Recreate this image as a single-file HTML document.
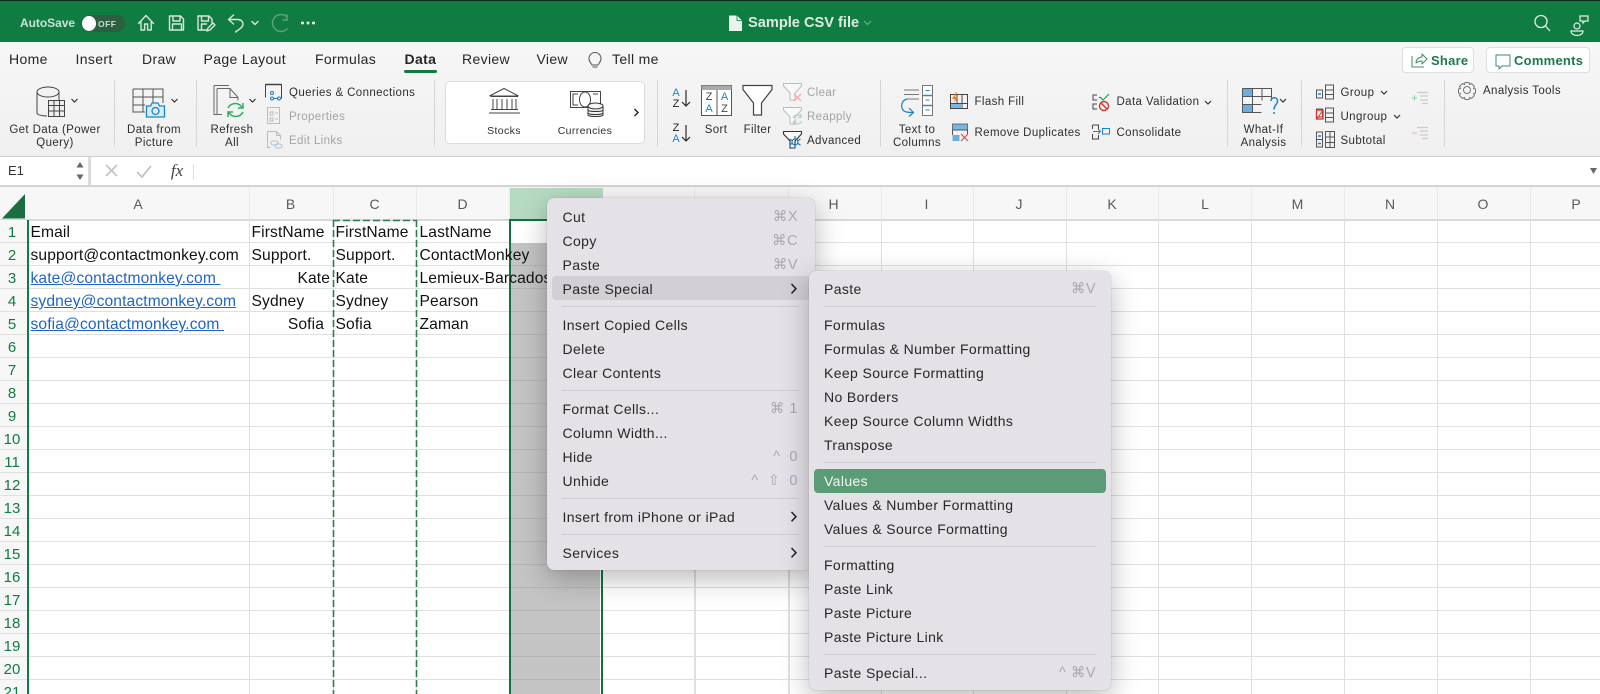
<!DOCTYPE html>
<html><head><meta charset="utf-8"><title>Sample CSV file</title>
<style>
html,body{margin:0;padding:0;background:#fff}
#r{position:relative;width:1600px;height:694px;overflow:hidden;font-family:"Liberation Sans",sans-serif;color:#2b2b2b;filter:blur(.3px)}
.a{position:absolute}
.t{position:absolute;white-space:nowrap;line-height:16px;transform:translateY(-50%)}
.c{position:absolute;white-space:nowrap;line-height:16px;transform:translate(-50%,-50%);text-align:center}
.tab{font-size:14px;letter-spacing:.35px;color:#262626}
.rb{font-size:11.5px;letter-spacing:.38px;color:#2e2e2e}
.dim{color:#a3a3a3}
.div{position:absolute;top:80px;width:1px;height:67px;background:#d6d6d6}
.hd{font-size:14px;color:#5a5a5a}
.rn{font-size:15px;color:#107c41;left:12px}
.cell{font-size:15.6px;letter-spacing:.12px;color:#111}
.v{position:absolute;top:220px;height:474px;width:1px;background:#e0e0e0}
.hv{position:absolute;top:188px;height:31px;width:1px;background:#ebebeb}
.m{position:absolute;background:#e4e2e7;border-radius:7px;box-shadow:0 8px 28px rgba(0,0,0,.28),0 0 1px rgba(0,0,0,.3)}
.mi{font-size:14px;letter-spacing:.38px;color:#262626}
.sc{position:absolute;white-space:nowrap;font-size:14.5px;color:#aaa9ad;line-height:16px;transform:translateY(-50%);text-align:right;letter-spacing:.5px}
.sep{position:absolute;height:1px;background:#cfcdd2}
svg{position:absolute;left:0;top:0;overflow:visible}
</style></head><body>
<div id="r">
<!-- title bar -->
<div class="a" style="left:0;top:0;width:1600px;height:42px;background:#107c41"></div>
<div class="a" style="left:0;top:0;width:1600px;height:1px;background:#0b2b1a"></div>
<div class="t" style="left:20px;top:23px;font-size:12px;font-weight:bold;color:#c9e2d3;letter-spacing:-.05px">AutoSave</div>
<div class="a" style="left:81px;top:15px;width:44px;height:17px;border-radius:9px;background:#2c5f42"></div>
<div class="a" style="left:82px;top:16px;width:14px;height:15px;border-radius:50%;background:#fff"></div>
<div class="t" style="left:98px;top:23.5px;font-size:8.5px;font-weight:bold;color:#c9dcd0;letter-spacing:.5px">OFF</div>
<div class="t" style="left:748px;top:23px;font-size:14.6px;font-weight:bold;color:#dcebe2">Sample CSV file</div>

<!-- ribbon -->
<div class="a" style="left:0;top:42px;width:1600px;height:115px;background:linear-gradient(#f6f6f6,#f0f0f0);border-bottom:1px solid #cfcfcf;box-sizing:border-box"></div>
<div class="t tab" style="left:9px;top:58.5px">Home</div>
<div class="t tab" style="left:75.5px;top:58.5px">Insert</div>
<div class="t tab" style="left:142px;top:58.5px">Draw</div>
<div class="t tab" style="left:203.5px;top:58.5px">Page Layout</div>
<div class="t tab" style="left:315px;top:58.5px">Formulas</div>
<div class="t tab" style="left:404.5px;top:58.5px;font-weight:bold">Data</div>
<div class="a" style="left:404px;top:70px;width:33px;height:3px;background:#107c41;border-radius:2px"></div>
<div class="t tab" style="left:462px;top:58.5px">Review</div>
<div class="t tab" style="left:536.5px;top:58.5px">View</div>
<div class="t tab" style="left:612px;top:58.5px">Tell me</div>

<div class="a" style="left:1402px;top:47px;width:72px;height:26px;background:#fff;border:1px solid #dedede;border-radius:4px;box-sizing:border-box"></div>
<div class="a" style="left:1486px;top:47px;width:104px;height:26px;background:#fff;border:1px solid #dedede;border-radius:4px;box-sizing:border-box"></div>
<div class="t" style="left:1431px;top:61px;font-size:13px;font-weight:bold;color:#1b7a4a;letter-spacing:.25px">Share</div>
<div class="t" style="left:1514px;top:61px;font-size:13px;font-weight:bold;color:#1b7a4a;letter-spacing:.25px">Comments</div>

<div class="div" style="left:114px"></div><div class="div" style="left:196px"></div><div class="div" style="left:434px"></div><div class="div" style="left:657px"></div><div class="div" style="left:880px"></div><div class="div" style="left:1227px"></div><div class="div" style="left:1301px"></div><div class="div" style="left:1444px"></div>
<div class="a" style="left:445px;top:81px;width:200px;height:63px;background:#fff;border:1px solid #dcdcdc;border-radius:5px;box-sizing:border-box"></div>

<div class="c rb" style="left:55px;top:129.5px">Get Data (Power</div>
<div class="c rb" style="left:55px;top:143px">Query)</div>
<div class="c rb" style="left:154px;top:129.5px">Data from</div>
<div class="c rb" style="left:154px;top:143px">Picture</div>
<div class="c rb" style="left:232px;top:129.5px">Refresh</div>
<div class="c rb" style="left:232px;top:143px">All</div>
<div class="t rb" style="left:289px;top:92.5px">Queries &amp; Connections</div>
<div class="t rb dim" style="left:289px;top:116.5px">Properties</div>
<div class="t rb dim" style="left:289px;top:140.5px">Edit Links</div>
<div class="c rb" style="left:504px;top:131px;font-size:10.5px">Stocks</div>
<div class="c rb" style="left:585px;top:131px;font-size:10.5px">Currencies</div>
<div class="c rb" style="left:716px;top:129.5px">Sort</div>
<div class="c rb" style="left:757.5px;top:129.5px">Filter</div>
<div class="t rb dim" style="left:807px;top:92.5px">Clear</div>
<div class="t rb dim" style="left:807px;top:116.5px">Reapply</div>
<div class="t rb" style="left:807px;top:140.5px">Advanced</div>
<div class="c rb" style="left:917px;top:129.5px">Text to</div>
<div class="c rb" style="left:917px;top:143px">Columns</div>
<div class="t rb" style="left:974.5px;top:102px">Flash Fill</div>
<div class="t rb" style="left:974.5px;top:132.5px">Remove Duplicates</div>
<div class="t rb" style="left:1116.5px;top:102px">Data Validation</div>
<div class="t rb" style="left:1116.5px;top:132.5px">Consolidate</div>
<div class="c rb" style="left:1263.5px;top:129.5px">What-If</div>
<div class="c rb" style="left:1263.5px;top:143px">Analysis</div>
<div class="t rb" style="left:1340.5px;top:92.5px">Group</div>
<div class="t rb" style="left:1340.5px;top:116.5px">Ungroup</div>
<div class="t rb" style="left:1340.5px;top:140.5px">Subtotal</div>
<div class="t rb" style="left:1483px;top:91px">Analysis Tools</div>

<!-- formula bar -->
<div class="a" style="left:0;top:157px;width:1600px;height:28px;background:#fff"></div>
<div class="a" style="left:88px;top:157px;width:3px;height:28px;background:#dcdcdc"></div>
<div class="a" style="left:193px;top:164px;width:1px;height:16px;background:#dfdfdf"></div>
<div class="a" style="left:0;top:185px;width:1600px;height:3px;background:#d4d4d4;border-bottom:1px solid #f5f5f5;box-sizing:border-box"></div>
<div class="t" style="left:8px;top:171px;font-size:13px;color:#333">E1</div>
<div class="c" style="left:177px;top:171px;font:italic 17px 'Liberation Serif',serif;color:#444">fx</div>

<!-- sheet -->
<div class="a" style="left:0;top:188px;width:1600px;height:31px;background:#f7f7f7;border-bottom:2px solid #d8d8d8;box-sizing:content-box"></div>
<div class="a" style="left:0;top:220px;width:27px;height:474px;background:#f7f7f7"></div>
<div class="a" style="left:0;top:220px;width:1600px;height:474px;background-image:repeating-linear-gradient(to bottom,transparent 0,transparent 21.9px,#e0e0e0 21.9px,#e0e0e0 23px)"></div>
<div class="a" style="left:510px;top:188px;width:93px;height:31px;background:#b6dbc3"></div>
<div class="hv" style="left:249px"></div><div class="hv" style="left:333px"></div><div class="hv" style="left:416px"></div><div class="hv" style="left:509px"></div><div class="hv" style="left:694px"></div><div class="hv" style="left:788px"></div><div class="hv" style="left:881px"></div><div class="hv" style="left:973px"></div><div class="hv" style="left:1066px"></div><div class="hv" style="left:1158px"></div><div class="hv" style="left:1251px"></div><div class="hv" style="left:1344px"></div><div class="hv" style="left:1437px"></div><div class="hv" style="left:1530px"></div>
<div class="v" style="left:249px"></div><div class="v" style="left:333px"></div><div class="v" style="left:416px"></div><div class="v" style="left:694px;width:1.5px"></div><div class="v" style="left:788px;width:1.5px"></div><div class="v" style="left:881px"></div><div class="v" style="left:973px"></div><div class="v" style="left:1066px"></div><div class="v" style="left:1158px"></div><div class="v" style="left:1251px"></div><div class="v" style="left:1344px"></div><div class="v" style="left:1437px"></div><div class="v" style="left:1530px"></div>
<div class="a" style="left:511px;top:243px;width:89px;height:451px;background:#c4c4c4;background-image:repeating-linear-gradient(to bottom,transparent 0,transparent 21.9px,#b4b4b4 21.9px,#b4b4b4 23px)"></div>
<div class="a" style="left:511px;top:220px;width:91px;height:23px;background:#fff"></div>
<div class="a" style="left:509px;top:219px;width:94px;height:475px;border-left:2px solid #13713d;border-right:2px solid #13713d;border-top:2px solid #13713d;box-sizing:border-box"></div>
<div class="a" style="left:27px;top:220px;width:2px;height:474px;background:#107c41"></div>

<div class="c hd" style="left:138px;top:204px">A</div><div class="c hd" style="left:290.5px;top:204px">B</div><div class="c hd" style="left:374.5px;top:204px">C</div><div class="c hd" style="left:462.5px;top:204px">D</div>
<div class="c hd" style="left:833.5px;top:204px">H</div><div class="c hd" style="left:926.5px;top:204px">I</div><div class="c hd" style="left:1019px;top:204px">J</div><div class="c hd" style="left:1112px;top:204px">K</div><div class="c hd" style="left:1205px;top:204px">L</div><div class="c hd" style="left:1297.5px;top:204px">M</div><div class="c hd" style="left:1390px;top:204px">N</div><div class="c hd" style="left:1483px;top:204px">O</div><div class="c hd" style="left:1576px;top:204px">P</div>

<div class="c rn" style="top:232.7px">1</div><div class="c rn" style="top:255.7px">2</div><div class="c rn" style="top:278.7px">3</div><div class="c rn" style="top:301.7px">4</div><div class="c rn" style="top:324.7px">5</div><div class="c rn" style="top:347.7px">6</div><div class="c rn" style="top:370.7px">7</div><div class="c rn" style="top:393.7px">8</div><div class="c rn" style="top:416.7px">9</div><div class="c rn" style="top:439.7px">10</div><div class="c rn" style="top:462.7px">11</div><div class="c rn" style="top:485.7px">12</div><div class="c rn" style="top:508.7px">13</div><div class="c rn" style="top:531.7px">14</div><div class="c rn" style="top:554.7px">15</div><div class="c rn" style="top:577.7px">16</div><div class="c rn" style="top:600.7px">17</div><div class="c rn" style="top:623.7px">18</div><div class="c rn" style="top:646.7px">19</div><div class="c rn" style="top:669.7px">20</div><div class="c rn" style="top:692.7px">21</div>

<div class="t cell" style="left:30.5px;top:233px">Email</div>
<div class="t cell" style="left:30.5px;top:256px">support@contactmonkey.com</div>
<div class="t cell" style="left:30.5px;top:279px;color:#1f66c2;text-decoration:underline">kate@contactmonkey.com&nbsp;</div>
<div class="t cell" style="left:30.5px;top:302px;color:#1f66c2;text-decoration:underline">sydney@contactmonkey.com</div>
<div class="t cell" style="left:30.5px;top:325px;color:#1f66c2;text-decoration:underline">sofia@contactmonkey.com&nbsp;</div>
<div class="t cell" style="left:251.5px;top:233px">FirstName</div>
<div class="t cell" style="left:251.5px;top:256px">Support.</div>
<div class="t cell" style="right:1270px;top:279px">Kate</div>
<div class="t cell" style="left:251.5px;top:302px">Sydney</div>
<div class="t cell" style="right:1276px;top:325px">Sofia</div>
<div class="t cell" style="left:335.5px;top:233px">FirstName</div>
<div class="t cell" style="left:335.5px;top:256px">Support.</div>
<div class="t cell" style="left:335.5px;top:279px">Kate</div>
<div class="t cell" style="left:335.5px;top:302px">Sydney</div>
<div class="t cell" style="left:335.5px;top:325px">Sofia</div>
<div class="t cell" style="left:419.5px;top:233px">LastName</div>
<div class="t cell" style="left:419.5px;top:256px">ContactMonkey</div>
<div class="t cell" style="left:419.5px;top:279px">Lemieux-Barcados</div>
<div class="t cell" style="left:419.5px;top:302px">Pearson</div>
<div class="t cell" style="left:419.5px;top:325px">Zaman</div>

<!-- icons -->
<svg width="1600" height="694" viewBox="0 0 1600 694" fill="none">
<!-- title bar icons -->
<g stroke="#d5e8dc" stroke-width="1.4" stroke-linejoin="round" stroke-linecap="round">
<path d="M138.5 23.5 146 15.5l7.5 8M141 21v9h3.6v-6h3v6h3.6v-9"/>
<path d="M169.5 16h11l3 3v11h-14zM173 16v5h7v-5M172.500 30v-6h9v6"/>
<path d="M198 16h11l3 3v4M198 16v14h8M201.500 16v5h7v-5M201.500 30v-6h5"/>
<path d="M207 31l1-3 5-5 2 2-5 5z"/>
<path d="M233.500 15l-5 4.500 5 4.500M228.500 19.500h9c4 0 5.500 2.500 5.500 4.500 0 2.500-2 4-4 5.500l-3.500 2.500"/>
<path d="M252 21.500l3 3 3-3"/>
</g>
<g stroke="#5da37d" stroke-width="1.4" stroke-linecap="round"><path d="M287 17a8.500 8.500 0 1 0 0 12M287 15v5h-4"/></g>
<g fill="#e4f0e9"><circle cx="302.500" cy="23" r="1.500"/><circle cx="308" cy="23" r="1.500"/><circle cx="313.500" cy="23" r="1.500"/></g>
<path d="M729 15.500h8l5 5V31h-13z" fill="#e9f2ed"/><path d="M737 15.500v5h5" stroke="#107c41" stroke-width=".8"/>
<path d="M864 21l3.500 3.500L871 21" stroke="#6eae8b" stroke-width="1.200"/>
<g stroke="#e6f1ea" stroke-width="1.300"><circle cx="1541" cy="21.500" r="6"/><path d="M1545.500 26l4.500 5"/></g>
<g stroke="#e6f1ea" stroke-width="1.200"><circle cx="1577" cy="26" r="3"/><path d="M1571 31c0 6 12 6 12 0zM1580 21v-5h8v5h-3l-2 2v-2z"/></g>
<!-- bulb -->
<g stroke="#555" stroke-width="1"><path d="M592 65c-1-2-3-3-3-6.500a6 6 0 0 1 12 0c0 3.500-2 4.500-3 6.500zM592.500 67h5"/></g>
<!-- share/comments -->
<g stroke="#3f8c65" stroke-width="1" stroke-linejoin="round"><path d="M1412 56v11h12M1416 63c0-4 3-6 6-6v-3l5 5-5 5v-3c-2 0-4 .500-6 2z"/></g>
<g stroke="#3f8c65" stroke-width="1" stroke-linejoin="round"><path d="M1496 55h14v11h-8l-3 3v-3h-3z"/></g>
<!-- get data -->
<g stroke="#444" stroke-width="1"><path d="M37 92v21c0 1.500 4 3 10 3M59 92v8"/><ellipse cx="48" cy="92" rx="11" ry="5"/>
<rect x="48.500" y="100.500" width="16" height="16" fill="#eee"/><path d="M48.500 105.500h16M48.500 111h16M54 100.500v16M59.500 100.500v16"/></g>
<g stroke="#333" stroke-width="1.200"><path d="M71.500 99l3 3 3-3M171.500 99l3 3 3-3M249.500 99l3 3 3-3M1205 101l3 3 3-3M1280 99l3 3 3-3M1381 91l3 3 3-3M1394 115l3 3 3-3"/></g>
<!-- picture -->
<g stroke="#555" stroke-width="1"><path d="M133 89h30v14M133 89v23h12M143 89v23M153 89v14M133 97h30M133 105h12"/></g>
<path d="M146.500 106h4l1.500-3h6l1.500 3h5v11h-18z" fill="#d9ecf9" stroke="#1b84c9" stroke-width="1.300"/><circle cx="155.500" cy="111" r="3.500" stroke="#1b84c9" stroke-width="1.300"/>
<!-- refresh -->
<g stroke="#666" stroke-width="1"><path d="M214 85.500h15M214 85.500v29h5M217 88.500h13l8 9v3M217 88.500v26h5M230 88.500v9h8"/></g>
<g stroke="#2eae60" stroke-width="1.500"><path d="M228 108a8 8 0 0 1 13-2l2 2M243 103v5h-5M243 112a8 8 0 0 1-13 2l-2-2M228 117v-5h5"/></g>
<!-- queries -->
<path d="M265.500 97.500V84.500h16v14" stroke="#444" stroke-width="1"/><path d="M265.500 84.500h16" stroke="#444" stroke-width="1.500"/><g stroke="#1b78c0" stroke-width="1"><circle cx="272" cy="93" r="1.500"/><circle cx="272" cy="98.500" r="1.500"/><circle cx="279" cy="98.500" r="1.500"/><path d="M273.500 98.500h4"/></g>
<g stroke="#bdbdbd" stroke-width="1"><rect x="267.500" y="107.500" width="12" height="16"/><path d="M270 112h3v3h-3zM270 118h3v3h-3zM275 113h3M275 119h3"/><path d="M267.500 131.500h9l4 4v4M267.500 131.500v16h3M276.500 131.500v4h4"/></g><g stroke="#a9c6dc" stroke-width="1.100"><rect x="271" y="141" width="7" height="4" rx="2"/><rect x="275" y="144" width="7" height="4" rx="2"/></g>
<!-- stocks -->
<g stroke="#444" stroke-width="1"><path d="M489.500 96 504 88.500 518.500 96zM491 96.500h27M493 99v10M497 99v10M502 99v10M507 99v10M512 99v10M516 99v10M491 109.500h27M489 113h31"/></g>
<!-- currencies -->
<g stroke="#444" stroke-width="1"><rect x="570.500" y="91.500" width="30" height="16"/><path d="M578 94h-5v11h5M598 94h-5"/><ellipse cx="585" cy="99.500" rx="5.500" ry="7.500"/></g>
<g fill="#f6f6f6" stroke="#333" stroke-width="1"><path d="M588 106v9c0 2 15 2 15 0v-9"/><ellipse cx="595.500" cy="106" rx="7.500" ry="3"/><path d="M588 110c0 2 15 2 15 0M588 113c0 2 15 2 15 0" fill="none"/></g>
<path d="M634.500 109l3.500 3.500-3.500 3.500" stroke="#222" stroke-width="1.400"/>
<!-- sort -->
<g stroke="#2b2b2b" stroke-width="1.200"><path d="M686 90v16M682 102l4 4 4-4M686 125v16M682 137l4 4 4-4"/></g>
<rect x="701.500" y="85.500" width="30" height="30" fill="#fff" stroke="#555"/><rect x="701.500" y="85.500" width="30" height="4.500" fill="#aaa"/><path d="M717 90v25" stroke="#555"/>
<!-- filter -->
<path d="M743 85.500h29v4L761.500 103v12h-8V103L743 89.500z" fill="#fff" stroke="#444" stroke-width="1.200"/>
<g stroke="#bdbdbd" stroke-width="1"><path d="M783.500 83.500h18v2.500L795 93v7h-5v-7l-6.500-7z" fill="#f8f8f8"/><path d="M783.500 107.500h18v2.500L795 117v7h-5v-7l-6.500-7z" fill="#f8f8f8"/></g>
<path d="M794 94l7 7M801 94l-7 7" stroke="#eea4a4" stroke-width="1.100"/>
<g stroke="#a5d6b4" stroke-width="1.100"><path d="M793 118a4.500 4.500 0 0 1 8-1M801 114v3.500h-3M801.500 121a4.500 4.500 0 0 1-8 1M793.500 125v-3.500h3"/></g>
<path d="M783.500 131.500h18v2.500L795 141v7h-5v-7l-6.500-7z" fill="#f8f8f8" stroke="#333" stroke-width="1.100"/>
<g stroke="#1b78c0" stroke-width="1.200"><circle cx="795" cy="142" r="3"/><path d="M795 136v2.500M795 145.500v2.500M789.500 139l2.500 1.500M798 143.500l2.500 1.500M789.500 145l2.500-1.500M798 140.500l2.500-1.500"/></g>
<!-- text to columns -->
<g stroke="#777" stroke-width="1"><path d="M904 90h15M904 94.500h15M906 99h13"/><rect x="922.500" y="85.500" width="10" height="30" fill="#fff"/><path d="M922.500 95.500h10M922.500 105.500h10" stroke-width="1.500"/></g>
<path d="M925.500 90.500h4M925.500 100h4M925.500 110h4" stroke="#1b84c9"/>
<path d="M907 99a7 7 0 0 0-3 12c2 1.500 5 1.500 9 1.500M909 108l4.500 4.500-4.500 4" stroke="#1b84c9" stroke-width="1.200"/>
<!-- flash fill -->
<g stroke="#444" stroke-width="1"><path d="M950.500 94.500h17v14h-17zM950.500 103.500h17M957 94.500v14M962 94.500v14"/></g>
<rect x="951" y="104" width="11" height="4" fill="#7ab6e4"/><path d="M956 92l-4 7h3l-2 5 5-7h-3l2-5z" fill="#f08020"/>
<!-- remove dup -->
<rect x="952.500" y="124" width="15" height="6" fill="#7ab6e4" stroke="#555" stroke-width=".8"/><path d="M952.500 130h15v4M952.500 130v5" stroke="#555"/><rect x="952.500" y="135" width="7" height="6" fill="#6aaee2"/>
<path d="M961 134l7 7M968 134l-7 7" stroke="#e34a4a" stroke-width="1.200"/>
<!-- validation -->
<g stroke="#444" stroke-width="1"><path d="M1097 95h-4v5h4M1097 104h-4v5h4M1099 97.500h1"/></g><path d="M1100 97l3 3 6-6" stroke="#38a85c" stroke-width="1.300"/><circle cx="1104" cy="106" r="4.500" stroke="#e02f2f" stroke-width="1.400"/><path d="M1101 103l6 6" stroke="#e02f2f" stroke-width="1.400"/>
<!-- consolidate -->
<g stroke="#444" stroke-width="1"><path d="M1092.500 125h6v5M1092.500 125v4M1092.500 134v5h6v-4"/></g><path d="M1093 131.500h7M1098 129l2.500 2.500-2.500 2.500" stroke="#1b84c9"/><rect x="1102.500" y="128.500" width="7" height="5.500" stroke="#1b84c9"/>
<!-- what if -->
<rect x="1242.500" y="88.500" width="10" height="7.500" fill="#6aaee2"/><rect x="1242.500" y="104" width="10" height="8" fill="#6aaee2"/><g stroke="#555"><path d="M1242.500 88.500h29v12M1242.500 88.500v24h19M1252.500 88.500v24M1262 88.500v12M1242.500 96.500h29M1242.500 104.500h19"/></g>
<path d="M1271 101c0-4 6-4.500 6.500-.5.500 4-3.500 4-3.500 9M1274 112v2" stroke="#1b84c9" stroke-width="1.500"/>
<!-- group -->
<g stroke="#555" stroke-width="1"><path d="M1316.500 90h6v8h-6zM1325.500 85h8v14h-8zM1325.500 90h8M1325.500 94.500h8M1316.500 109h6v8h-6zM1325.500 108h8v14h-8zM1325.500 113h8M1325.500 117.500h8"/><path d="M1316.500 132h6v15h-6zM1325.500 131.500h9v16h-9zM1330 131.500v16M1316.500 139.500h6M1325.500 137h9M1325.500 142.500h9"/></g>
<path d="M1318 94h3M1318 136h3M1318 143.500h3" stroke="#1b84c9" stroke-width="1.500"/>
<rect x="1316.500" y="110" width="6.500" height="9" stroke="#e02f2f" stroke-width="1.300"/><path d="M1317 119l6-9" stroke="#e02f2f"/>
<path d="M1412 98h5M1414.500 95.500v5" stroke="#8fd0a5"/><g stroke="#ccc" stroke-width="1.200"><path d="M1417 92.500h11M1420 96h8M1420 100h8M1422 103.500h6M1417 127.500h11M1420 131h8M1420 135h8M1422 138.500h6"/></g><path d="M1412 133h5" stroke="#eeb0a8"/>
<!-- gear -->
<g stroke="#777" stroke-width="1"><circle cx="1467" cy="90" r="3.500"/><path d="M1465 82.500h4l.5 2 2-1 3 3-1 2 2 .5v4l-2 .5 1 2-3 3-2-1-.5 2h-4l-.5-2-2 1-3-3 1-2-2-.5v-4l2-.5-1-2 3-3 2 1z"/></g>
<!-- formula bar icons -->
<path d="M76.500 167.500l3.500-5.500 3.500 5.500zM76.500 174.500l3.500 5.500 3.500-5.500z" fill="#666"/>
<path d="M106 165l11 11M117 165l-11 11M137 172l5 5 9-11" stroke="#c4c4c4" stroke-width="1.800"/>
<path d="M1590 168h7l-3.500 6z" fill="#666"/>
<!-- select all triangle -->
<path d="M2 218.500 25 194v24.500z" fill="#1a6e40"/>
<!-- dashed C -->
<g stroke="#2e7d52" stroke-width="1.600" stroke-dasharray="7 3"><path d="M333.500 220v474M416.500 220v474M333 220.500h84"/></g>
</svg>
<div class="c" style="left:676px;top:93px;font-size:11px;color:#1b84c9;line-height:10px">A</div>
<div class="c" style="left:676px;top:103.500px;font-size:11px;color:#222;line-height:10px">Z</div>
<div class="c" style="left:676px;top:128px;font-size:11px;color:#222;line-height:10px">Z</div>
<div class="c" style="left:676px;top:139px;font-size:11px;color:#1b84c9;line-height:10px">A</div>
<div class="c" style="left:709px;top:97px;font-size:11px;color:#444;line-height:10px">Z</div>
<div class="c" style="left:709px;top:108.500px;font-size:11px;color:#1b84c9;line-height:10px">A</div>
<div class="c" style="left:724.500px;top:97px;font-size:11px;color:#1b84c9;line-height:10px">A</div>
<div class="c" style="left:724.500px;top:108.500px;font-size:11px;color:#444;line-height:10px">Z</div>

<!-- context menu -->
<div class="m" style="left:547px;top:198px;width:268px;height:372px"></div>
<div class="a" style="left:552px;top:276px;width:258px;height:24px;background:#d2d0d5;border-radius:4px"></div>
<div class="sep" style="left:562px;top:306px;width:236px"></div>
<div class="sep" style="left:562px;top:390px;width:236px"></div>
<div class="sep" style="left:562px;top:498px;width:236px"></div>
<div class="sep" style="left:562px;top:534px;width:236px"></div>
<div class="t mi" style="left:562.500px;top:216.700px">Cut</div>
<div class="t mi" style="left:562.500px;top:240.700px">Copy</div>
<div class="t mi" style="left:562.500px;top:264.700px">Paste</div>
<div class="t mi" style="left:562.500px;top:288.700px">Paste Special</div>
<div class="t mi" style="left:562.500px;top:324.700px">Insert Copied Cells</div>
<div class="t mi" style="left:562.500px;top:348.700px">Delete</div>
<div class="t mi" style="left:562.500px;top:372.700px">Clear Contents</div>
<div class="t mi" style="left:562.500px;top:408.700px">Format Cells...</div>
<div class="t mi" style="left:562.500px;top:432.700px">Column Width...</div>
<div class="t mi" style="left:562.500px;top:456.700px">Hide</div>
<div class="t mi" style="left:562.500px;top:480.700px">Unhide</div>
<div class="t mi" style="left:562.500px;top:516.700px">Insert from iPhone or iPad</div>
<div class="t mi" style="left:562.500px;top:552.700px">Services</div>
<div class="sc" style="right:802px;top:216.700px">⌘X</div>
<div class="sc" style="right:802px;top:240.700px">⌘C</div>
<div class="sc" style="right:802px;top:264.700px">⌘V</div>
<div class="sc" style="right:802px;top:408.700px">⌘ 1</div>
<div class="sc" style="right:802px;top:456.700px">^&nbsp; 0</div>
<div class="sc" style="right:802px;top:480.700px">^&nbsp; ⇧&nbsp; 0</div>
<svg width="1600" height="694" viewBox="0 0 1600 694" fill="none"><path d="M791.500 284l4.500 4.700-4.500 4.700M791.500 512l4.500 4.700-4.500 4.700M791.500 548l4.500 4.700-4.500 4.700" stroke="#222" stroke-width="1.500"/></svg>

<!-- submenu -->
<div class="m" style="left:809px;top:271px;width:302px;height:419px"></div>
<div class="a" style="left:814px;top:468.500px;width:291.500px;height:24px;background:#5b9b75;border-radius:4px"></div>
<div class="sep" style="left:824px;top:306px;width:272px"></div>
<div class="sep" style="left:824px;top:462px;width:272px"></div>
<div class="sep" style="left:824px;top:546px;width:272px"></div>
<div class="sep" style="left:824px;top:654px;width:272px"></div>
<div class="t mi" style="left:824px;top:288.700px">Paste</div>
<div class="t mi" style="left:824px;top:324.700px">Formulas</div>
<div class="t mi" style="left:824px;top:348.700px">Formulas &amp; Number Formatting</div>
<div class="t mi" style="left:824px;top:372.700px">Keep Source Formatting</div>
<div class="t mi" style="left:824px;top:396.700px">No Borders</div>
<div class="t mi" style="left:824px;top:420.700px">Keep Source Column Widths</div>
<div class="t mi" style="left:824px;top:444.700px">Transpose</div>
<div class="t mi" style="left:824px;top:480.700px;color:#f2f7f4">Values</div>
<div class="t mi" style="left:824px;top:504.700px">Values &amp; Number Formatting</div>
<div class="t mi" style="left:824px;top:528.700px">Values &amp; Source Formatting</div>
<div class="t mi" style="left:824px;top:564.700px">Formatting</div>
<div class="t mi" style="left:824px;top:588.700px">Paste Link</div>
<div class="t mi" style="left:824px;top:612.700px">Paste Picture</div>
<div class="t mi" style="left:824px;top:636.700px">Paste Picture Link</div>
<div class="t mi" style="left:824px;top:672.700px">Paste Special...</div>
<div class="sc" style="right:504px;top:288.700px">⌘V</div>
<div class="sc" style="right:504px;top:672.700px">^ ⌘V</div>
</div>
</body></html>
